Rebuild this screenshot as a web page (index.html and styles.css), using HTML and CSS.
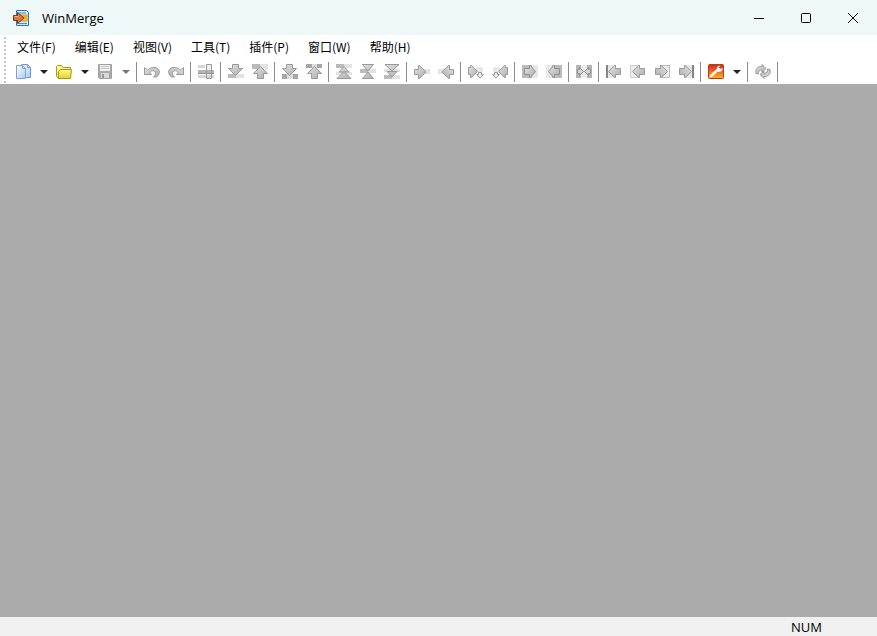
FILE: index.html
```html
<!DOCTYPE html>
<html lang="zh-CN">
<head>
    <meta charset="UTF-8">
    <meta name="viewport" content="width=device-width, initial-scale=1.0">
    <title>WinMerge</title>
    <link rel="stylesheet" href="styles.css">
</head>
<body>

    <!-- shared gradients and arrow shapes -->
    <svg class="defs" width="0" height="0" aria-hidden="true">
        <defs>
            <linearGradient id="gray" x1="0" y1="0" x2="1" y2="1">
                <stop offset="0" stop-color="#e4e4e4"/><stop offset="1" stop-color="#acacac"/>
            </linearGradient>
            <linearGradient id="blue" x1="0" y1="0" x2="1" y2="1">
                <stop offset="0" stop-color="#ffffff"/><stop offset="1" stop-color="#a9cbf8"/>
            </linearGradient>
            <linearGradient id="yellow" x1="0" y1="0" x2="0" y2="1">
                <stop offset="0" stop-color="#fffb9a"/><stop offset="1" stop-color="#e3d31c"/>
            </linearGradient>
            <linearGradient id="red" x1="0" y1="0" x2="0" y2="1">
                <stop offset="0" stop-color="#d7261a"/><stop offset="1" stop-color="#ffb321"/>
            </linearGradient>
            <path id="down" d="M4.5.5h6v4h4l-7 7-7-7h4z" fill="url(#gray)" stroke="#999"/>
            <path id="up" d="M8.5 2.5l7 7h-4v5h-6v-5h-4z" fill="url(#gray)" stroke="#999"/>
            <path id="right" d="M.5 5.5h4v-4h1l6.5 6.5-6.5 6.5h-1v-4h-4z" fill="url(#gray)" stroke="#999"/>
            <path id="left-file" d="M14.5 4.5h-5v-3h-1L2.500 7.500l6 6h1v-3h5z" fill="url(#gray)" stroke="#999"/>
        </defs>
    </svg>

    <header class="titlebar">
        <svg class="logo" viewBox="0 0 18 18" aria-hidden="true">
            <path d="M4.5 1.5h10l2 2v13h-12z" fill="#cfe7fa" stroke="#2f78b7"/>
            <path d="M6 4h8M6 14.5h9" stroke="#4a90cb"/>
            <path d="M6 6h9v2H6zM8 9h7v3H8z" fill="#ffc629" stroke="#e49a16"/>
            <path d="M1.5 6.5h4v-3l6.5 5.5-6.5 5.5v-3h-4z" fill="#dd7736" stroke="#713b29"/>
            <path d="M2.500 7.500h4" stroke="#f5b382"/>
        </svg>
        <h1>WinMerge</h1>
        <div class="window-buttons">
            <button aria-label="最小化"><svg viewBox="0 0 12 12"><path d="M1 6.5h10"/></svg></button>
            <button aria-label="最大化"><svg viewBox="0 0 12 12"><rect x="1.5" y="1.5" width="9" height="9" rx="1"/></svg></button>
            <button aria-label="关闭"><svg viewBox="0 0 12 12"><path d="M1 1l10 10M11 1L1 11"/></svg></button>
        </div>
    </header>

    <div class="bars">
        <div class="grip"></div>
        <div class="rows">
            <nav class="menu">
                <button>文件(F)</button>
                <button>编辑(E)</button>
                <button>视图(V)</button>
                <button>工具(T)</button>
                <button>插件(P)</button>
                <button>窗口(W)</button>
                <button>帮助(H)</button>
            </nav>

            <div class="toolbar" role="toolbar" aria-label="工具栏">
                <button class="tool" aria-label="新建">
                    <svg viewBox="0 0 16 16"><path d="M6.5.5h6l3 3v10h-9z" fill="url(#blue)" stroke="#6e96d6"/><path d="M1.500 1.500h6l3 3v10h-9z" fill="url(#blue)" stroke="#7da2dc"/><path d="M12.500.5v3h3M7.500 2v2.500h3" fill="none" stroke="#7da2dc"/></svg>
                </button>
                <button class="drop" aria-label="新建选项"></button>
                <button class="tool" aria-label="打开">
                    <svg viewBox="0 0 16 16"><path d="M.5 12.500v-10l1-1h4l1.500 2h7.500v3" fill="#fdf68d" stroke="#a99a10"/><path d="M2.500 14.500h12l1-9h-11l-2 2z" fill="url(#yellow)" stroke="#a99a10"/><path d="M.5 12.500l2 2" stroke="#a99a10"/></svg>
                </button>
                <button class="drop" aria-label="打开选项"></button>
                <button class="tool" aria-label="保存" disabled>
                    <svg viewBox="0 0 16 16"><path d="M1.500.5h13v14h-12l-1-1z" fill="#aaa" stroke="#a2a2a2"/><path d="M3 1h10v6H3z" fill="#eee"/><path d="M4 2.500h8M4 4.500h8" stroke="#c8c8c8"/><path d="M4 9h8v5H4z" fill="#d9d9d9"/><path d="M5 10h2v4H5z" fill="#999"/></svg>
                </button>
                <button class="drop" aria-label="保存选项" disabled></button>
                <span class="sep"></span>

                <button class="tool" aria-label="撤销" disabled>
                    <svg viewBox="0 0 16 16"><path d="M.5 3.500v7h7L5.500 8c3-2.500 6-1 6 1.500 0 1.500-1 2.500-2 3.500h3c5-4 3-9.500-2.500-9.500-2.500 0-5 1-6.500 2.500z" fill="url(#gray)" stroke="#999"/></svg>
                </button>
                <button class="tool" aria-label="重做" disabled>
                    <svg viewBox="0 0 16 16"><path transform="matrix(-1 0 0 1 16 0)" d="M.5 3.500v7h7L5.500 8c3-2.500 6-1 6 1.500 0 1.500-1 2.500-2 3.500h3c5-4 3-9.500-2.500-9.500-2.500 0-5 1-6.500 2.500z" fill="url(#gray)" stroke="#999"/></svg>
                </button>
                <span class="sep"></span>

                <button class="tool" aria-label="行内差异" disabled>
                    <svg viewBox="0 0 16 16"><path d="M0 1h7v3H0zM0 11h16v3H0z" fill="#d6d6d6"/><path d="M0 6h16v4H0z" fill="#b5b5b5"/><path d="M0 9.500h16" stroke="#8f8f8f"/><path d="M8.500.5h5v14h-5z" fill="none" stroke="#999"/><path d="M9 1h4v5H9z" fill="#eee"/></svg>
                </button>
                <span class="sep"></span>

                <button class="tool" aria-label="下一处差异" disabled>
                    <svg viewBox="0 0 16 16"><path d="M0 10h8v4H0z" fill="#bbb"/><path d="M8 10h8v4H8z" fill="#e2e2e2"/><use href="#down"/></svg>
                </button>
                <button class="tool" aria-label="上一处差异" disabled>
                    <svg viewBox="0 0 16 16"><path d="M0 0h8v5H0z" fill="#bbb"/><path d="M8 0h8v5H8z" fill="#e2e2e2"/><use href="#up"/></svg>
                </button>
                <span class="sep"></span>

                <button class="tool" aria-label="下一处冲突" disabled>
                    <svg viewBox="0 0 16 16"><path d="M0 10h5v5H0zM11 10h5v5h-5z" fill="#a6a6a6"/><path d="M5 10h6v5H5z" fill="#ddd"/><use href="#down"/></svg>
                </button>
                <button class="tool" aria-label="上一处冲突" disabled>
                    <svg viewBox="0 0 16 16"><path d="M0 0h6v4H0zM11 0h5v4h-5z" fill="#a6a6a6"/><path d="M6 0h5v4H6z" fill="#ddd"/><use href="#up"/></svg>
                </button>
                <span class="sep"></span>

                <button class="tool" aria-label="第一处差异" disabled>
                    <svg viewBox="0 0 16 16"><path d="M0 0h8v4H0z" fill="#bbb"/><path d="M8 0h8v4H8zM0 8h16v3H0z" fill="#e2e2e2"/><path d="M8 2.500l5 5.500H3zM8 7.500l7 7H1z" fill="url(#gray)" stroke="#999"/></svg>
                </button>
                <button class="tool" aria-label="当前差异" disabled>
                    <svg viewBox="0 0 16 16"><path d="M0 5h8v4H0z" fill="#bbb"/><path d="M8 5h8v4H8z" fill="#e2e2e2"/><path d="M2.500.5h11L8 7zM2.500 14.500h11L8 8z" fill="url(#gray)" stroke="#999"/></svg>
                </button>
                <button class="tool" aria-label="最后一处差异" disabled>
                    <svg viewBox="0 0 16 16"><path d="M0 11h8v4H0z" fill="#bbb"/><path d="M8 11h8v4H8zM0 5h16v3H0z" fill="#e2e2e2"/><path d="M1 .5h14l-7 6.500zM3 7.500h10L8 13z" fill="url(#gray)" stroke="#999"/></svg>
                </button>
                <span class="sep"></span>

                <button class="tool" aria-label="复制到右侧" disabled>
                    <svg viewBox="0 0 16 16"><path d="M8 5h8v5H8z" fill="#e2e2e2"/><use href="#right"/></svg>
                </button>
                <button class="tool" aria-label="复制到左侧" disabled>
                    <svg viewBox="0 0 16 16"><path d="M0 5h8v5H0z" fill="#e2e2e2"/><use href="#right" transform="matrix(-1 0 0 1 16 0)"/></svg>
                </button>
                <span class="sep"></span>

                <button class="tool" aria-label="复制到右侧并前进" disabled>
                    <svg viewBox="0 0 16 16"><path d="M8 3h7v5H8z" fill="#e8e8e8"/><path d="M.5 3.500h2v-2h1l6 6-6 6h-1v-3h-2z" fill="url(#gray)" stroke="#999"/><path d="M10.500 8.500h3v2h2l-3.500 3.500-3.500-3.500h2z" fill="#eee" stroke="#999"/></svg>
                </button>
                <button class="tool" aria-label="复制到左侧并前进" disabled>
                    <svg viewBox="0 0 16 16"><path d="M1 3h7v5H1z" fill="#e8e8e8"/><path d="M15.500 3.500h-2v-2h-1l-6 6 6 6h1v-3h2z" fill="url(#gray)" stroke="#999"/><path d="M2.500 8.500h3v2h2L4 14 .5 10.500h2z" fill="#eee" stroke="#999"/></svg>
                </button>
                <span class="sep"></span>

                <button class="tool" aria-label="全部复制到右侧" disabled>
                    <svg viewBox="0 0 16 16"><path d="M0 1h10v13H0z" fill="#bbb"/><path d="M10 1h6v13h-6z" fill="#e8e8e8"/><path d="M2.500 4.500h5v-3h1l5 6-5 6h-1v-3h-5z" fill="url(#gray)" stroke="#8f8f8f"/></svg>
                </button>
                <button class="tool" aria-label="全部复制到左侧" disabled>
                    <svg viewBox="0 0 16 16"><path d="M6 1h10v13H6z" fill="#bbb"/><path d="M0 1h6v13H0z" fill="#e8e8e8"/><path d="M13.500 4.500h-5v-3h-1l-5 6 5 6h1v-3h5z" fill="url(#gray)" stroke="#8f8f8f"/></svg>
                </button>
                <span class="sep"></span>

                <button class="tool" aria-label="自动合并" disabled>
                    <svg viewBox="0 0 16 16"><path d="M0 1h5v13H0zM11 1h5v13h-5z" fill="#b5b5b5"/><path d="M5 1h6v13H5z" fill="#ececec"/><path d="M1.500 5.500h2v-2l4 4-4 4v-2h-2zM14.500 5.500h-2v-2l-4 4 4 4v-2h2z" fill="#d6d6d6" stroke="#8f8f8f"/></svg>
                </button>
                <span class="sep"></span>

                <button class="tool" aria-label="第一个文件" disabled>
                    <svg viewBox="0 0 16 16"><path d="M1 1v13" stroke="#858585" stroke-width="2"/><path d="M2 1h6v13H2z" fill="#e6e6e6"/><use href="#left-file"/></svg>
                </button>
                <button class="tool" aria-label="上一个文件" disabled>
                    <svg viewBox="0 0 16 16"><path d="M.5 1.500h9v12h-9z" fill="#eee" stroke="#ccc"/><use href="#left-file"/></svg>
                </button>
                <button class="tool" aria-label="下一个文件" disabled>
                    <svg viewBox="0 0 16 16"><g transform="matrix(-1 0 0 1 16 0)"><path d="M.5 1.500h9v12h-9z" fill="#eee" stroke="#bbb"/><use href="#left-file"/></g></svg>
                </button>
                <button class="tool" aria-label="最后一个文件" disabled>
                    <svg viewBox="0 0 16 16"><g transform="matrix(-1 0 0 1 16 0)"><path d="M1 1v13" stroke="#858585" stroke-width="2"/><path d="M2 1h6v13H2z" fill="#e6e6e6"/><use href="#left-file"/></g></svg>
                </button>
                <span class="sep"></span>

                <button class="tool" aria-label="选项">
                    <svg viewBox="0 0 16 16"><rect x=".5" y=".5" width="15" height="14" rx="1" fill="url(#red)" stroke="#b83a1c"/><path d="M3 12l7.500-7" stroke="#fff" stroke-width="2.500" stroke-linecap="round"/><path d="M12.500 1.500l-2 2 1.500 1.500 2.500-1c.5 3-2 4.500-5 3.500C8 4.500 9 1.500 12.500 1.500z" fill="#fff"/></svg>
                </button>
                <button class="drop" aria-label="选项菜单"></button>
                <span class="sep"></span>

                <button class="tool" aria-label="刷新" disabled>
                    <svg viewBox="0 0 16 16"><path id="cycle" d="M1 9.500C0 5 3 2 7 2.500V.5L11 4.500 7 8V6C4.500 5.500 3 7.500 3.500 10z" fill="url(#gray)" stroke="#999"/><use href="#cycle" transform="rotate(180 8 7.500)"/></svg>
                </button>
                <span class="sep"></span>
            </div>
        </div>
    </div>

    <main class="workspace"></main>

    <footer class="statusbar"><span>NUM</span></footer>

</body>
</html>
```

FILE: styles.css
```css
* {
    box-sizing: border-box;
}
body {
    margin: 0;
    min-height: 100vh;
    display: flex;
    flex-direction: column;
    font-family: "Open Sans", "Noto Sans CJK SC", sans-serif;
    font-size: 13px;
    color: #000;
    background: #fff;
}
button {
    padding: 0;
    border: none;
    background: none;
    font: inherit;
    color: inherit;
}
svg {
    display: block;
}
.defs {
    position: absolute;
}

/* title bar */
.titlebar {
    display: flex;
    align-items: center;
    height: 35px;
    padding-left: 12px;
    background: #eff8f8;
}
.logo {
    width: 18px;
    height: 18px;
}
.titlebar h1 {
    margin: 0 auto 0 12px;
    font-size: 13px;
    font-weight: normal;
}
.window-buttons {
    display: flex;
    height: 100%;
    padding-right: 1px;
}
.window-buttons button {
    display: flex;
    align-items: center;
    justify-content: center;
    width: 47px;
}
.window-buttons svg {
    width: 12px;
    height: 12px;
    fill: none;
    stroke: #000;
}
.window-buttons button:hover {
    background: #dde6e6;
}

/* menu and toolbar */
.bars {
    display: flex;
    padding-left: 4px;
    background: #fff;
}
.grip {
    width: 2px;
    margin: 2px 0 1px;
    background: repeating-linear-gradient(#c2c2c2 0 2px, #fff 2px 4px);
}
.rows {
    flex: 1;
}
.menu {
    display: flex;
    flex-wrap: wrap;
    gap: 19px;
    padding-left: 11px;
}
.menu button {
    height: 24px;
    font-family: "Noto Sans CJK SC", sans-serif;
    font-size: 12px;
    line-height: 22px;
}
.toolbar {
    display: flex;
    flex-wrap: wrap;
    padding-left: 5px;
}
.tool {
    display: flex;
    align-items: center;
    justify-content: center;
    width: 24px;
    height: 25px;
}
.tool svg {
    width: 16px;
    height: 16px;
}
.drop {
    width: 17px;
    padding-left: 5px;
}
.drop::before {
    content: "";
    display: block;
    width: 0;
    border: solid transparent;
    border-width: 4px 4px 0;
    border-top-color: #222;
}
.drop:disabled::before {
    border-top-color: #777;
}
.sep {
    width: 6px;
    height: 20px;
    margin-top: 3px;
    padding-left: 2px;
}
.sep::before {
    content: "";
    display: block;
    width: 1px;
    height: 100%;
    background: #8c8c8c;
}

.workspace {
    flex: 1;
    background: #ababab;
}
.statusbar {
    display: flex;
    justify-content: flex-end;
    height: 19px;
    padding-right: 55px;
    background: #f0f0f0;
    line-height: 20px;
}
```
